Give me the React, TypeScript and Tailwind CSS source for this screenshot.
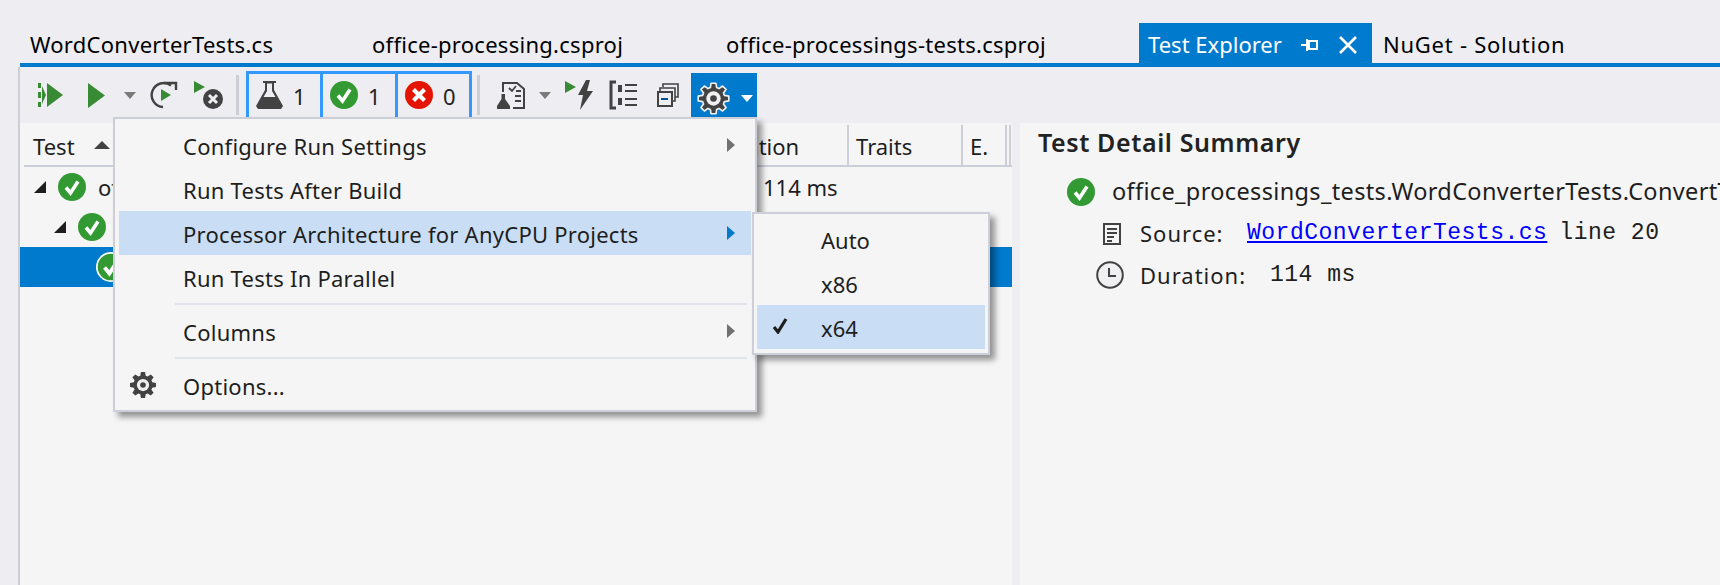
import React from 'react';

const gearPath = (cx: number, cy: number, outer: number, inner: number, teeth = 8) => {
  const pts: string[] = [];
  const step = (Math.PI * 2) / teeth;
  for (let i = 0; i < teeth; i++) {
    const a = i * step - Math.PI / 2;
    const list: [number, number][] = [
      [inner, a - step * 0.36],
      [outer, a - step * 0.2],
      [outer, a + step * 0.2],
      [inner, a + step * 0.36],
    ];
    list.forEach(([r, t]) => pts.push(`${(cx + r * Math.cos(t)).toFixed(2)} ${(cy + r * Math.sin(t)).toFixed(2)}`));
  }
  return `M${pts.join('L')}Z`;
};

const Gear = ({ outline = false, size = 28 }: { outline?: boolean; size?: number }) => (
  <svg width={size} height={size} viewBox="0 0 32 32">
    <path
      d={gearPath(16, 16, 15, 11)}
      fill="#424242"
      stroke={outline ? '#f0eff1' : 'none'}
      strokeWidth={outline ? 1.6 : 0}
      strokeLinejoin="round"
    />
    <circle cx="16" cy="16" r="7" fill="#f0eff1" />
    <circle cx="16" cy="16" r="3.2" fill="#424242" />
  </svg>
);

const CheckCircle = ({ size = 28, ring = false }: { size?: number; ring?: boolean }) => (
  <svg width={size} height={size} viewBox="0 0 28 28" className="shrink-0">
    <circle cx="14" cy="14" r={ring ? 13.2 : 14} fill="#339933" stroke={ring ? '#ffffff' : 'none'} strokeWidth={ring ? 1.6 : 0} />
    <path d="M8 14.5 L12.5 20 L20 8.5" fill="none" stroke="#ffffff" strokeWidth="3.6" />
  </svg>
);

const CrossCircle = () => (
  <svg width="28" height="28" viewBox="0 0 28 28">
    <circle cx="14" cy="14" r="14" fill="#e51400" />
    <path d="M8.5 8.5 L19.5 19.5 M19.5 8.5 L8.5 19.5" stroke="#ffffff" strokeWidth="4.2" />
  </svg>
);

const Flask = () => (
  <svg width="27" height="28" viewBox="0 0 27 28">
    <path d="M7 0H20V2H18V9L27 25L25 28H2L0 25L9 9V2H7Z" fill="#424242" />
    <path d="M11 2.5H16V10L19.5 16H7.5L11 10Z" fill="#eeeef2" />
  </svg>
);

const Caret = ({ color = '#7a7a7a' }: { color?: string }) => (
  <svg width="12" height="7" viewBox="0 0 12 7">
    <path d="M0 0H12L6 7Z" fill={color} />
  </svg>
);

const Arrow = ({ color = '#717171' }: { color?: string }) => (
  <svg width="8" height="14" viewBox="0 0 8 14" className="absolute right-[16px] top-[15px]">
    <path d="M0 0L8 7L0 14Z" fill={color} />
  </svg>
);

const Separator = () => <div className="w-[3px] h-[40px] bg-[#ccced8]" />;

const CountButton = ({ icon, count, width }: { icon: React.ReactNode; count: string; width: string }) => (
  <div className={`${width} h-[50px] flex items-start pt-[7px] pl-[7px] border-[3px] border-b-0 border-[#3399ff] -ml-[3px] first:ml-0`}>
    {icon}
    <span className="ml-[10px] text-[22px] leading-[30px] text-[#222222]">{count}</span>
  </div>
);

const Toolbar = () => (
  <div className="h-[56px] flex items-center">
    <svg width="26" height="26" viewBox="0 0 26 26" className="ml-[18px]">
      <path d="M0 1H3V6H0ZM0 10H3V16H0ZM0 20H3V25H0Z" fill="#388a34" />
      <path d="M4 4L8 13L4 22Z" fill="#388a34" />
      <path d="M9 1L25 13L9 25Z" fill="#388a34" />
    </svg>
    <svg width="17" height="25" viewBox="0 0 17 25" className="ml-[24px]">
      <path d="M0 0L17 12.5L0 25Z" fill="#388a34" />
    </svg>
    <div className="ml-[19px] flex"><Caret /></div>
    <svg width="28" height="28" viewBox="0 0 28 28" className="ml-[14px]">
      <path d="M21 4.5A12 12 0 1 0 13 26" fill="none" stroke="#424242" strokeWidth="2.4" />
      <path d="M14 2H26V9" fill="none" stroke="#424242" strokeWidth="2.4" />
      <path d="M11 8L21 14L11 20Z" fill="#388a34" />
    </svg>
    <svg width="29" height="28" viewBox="0 0 29 28" className="ml-[16px]">
      <path d="M0 0L11 6L0 12Z" fill="#388a34" />
      <circle cx="19" cy="18" r="10" fill="#424242" />
      <path d="M15 14L23 22M23 14L15 22" stroke="#eeeef2" strokeWidth="3" />
    </svg>
    <div className="ml-[13px]"><Separator /></div>
    <div className="ml-[7px] flex self-start mt-[4px]">
      <CountButton icon={<Flask />} count="1" width="w-[77px]" />
      <CountButton icon={<CheckCircle />} count="1" width="w-[78px]" />
      <CountButton icon={<CrossCircle />} count="0" width="w-[77px]" />
    </div>
    <div className="ml-[5px]"><Separator /></div>
    <svg width="28" height="28" viewBox="0 0 28 28" className="ml-[17px]">
      <path d="M6 11V2H20L27 8V27H16" fill="none" stroke="#424242" strokeWidth="2" />
      <path d="M12 7L15 10L19 5M19 10H24M18 15H24M18 20H24" fill="none" stroke="#424242" strokeWidth="1.8" />
      <path d="M2 13H10M4.5 13V18L0 25V28H13V25L8 18V13Z" fill="#424242" />
    </svg>
    <div className="ml-[14px] flex"><Caret /></div>
    <svg width="29" height="30" viewBox="0 0 29 30" className="ml-[14px]">
      <path d="M0 1L11 7L0 13Z" fill="#388a34" />
      <path d="M21 0L13 15H18L15 30L28 11H22L25 0Z" fill="#424242" />
    </svg>
    <svg width="28" height="30" viewBox="0 0 28 30" className="ml-[15px]">
      <path d="M7 2H2V28H7" fill="none" stroke="#424242" strokeWidth="3" />
      <path d="M9 5H13V12H9ZM9 18H13V25H9Z" fill="#424242" />
      <path d="M16 5H28M16 11H28M16 19H28M16 25H28" stroke="#424242" strokeWidth="2.2" />
    </svg>
    <svg width="22" height="24" viewBox="0 0 22 24" className="ml-[20px]">
      <path d="M6 4V1H21V14H18" fill="none" stroke="#424242" strokeWidth="1.6" />
      <path d="M3 8V5H18V18H15" fill="none" stroke="#424242" strokeWidth="1.6" />
      <rect x="1" y="9" width="14" height="14" fill="none" stroke="#424242" strokeWidth="2" />
      <path d="M4 16H11" stroke="#00529b" strokeWidth="2" />
    </svg>
    <div className="ml-[12px] self-start mt-[6px] w-[66px] h-[50px] bg-[#007acc] flex items-center pl-[6px]">
      <Gear outline size={33} />
      <div className="ml-[11px] flex"><Caret color="#ffffff" /></div>
    </div>
  </div>
);

const MenuItem = ({
  label,
  active = false,
  arrow = false,
  icon,
}: {
  label: string;
  active?: boolean;
  arrow?: boolean;
  icon?: React.ReactNode;
}) => (
  <div className={`relative h-[44px] flex items-center pl-[64px] pt-[3px] text-[22px] tracking-[0.25px] text-[#1e1e1e] ${active ? 'bg-[#c9def5]' : ''}`}>
    {icon && <div className="absolute left-[10px] top-[8px] flex">{icon}</div>}
    {label}
    {arrow && <Arrow color={active ? '#007acc' : '#717171'} />}
  </div>
);

const MenuSeparator = () => <div className="ml-[56px] mr-[4px] h-[2px] my-[4px] bg-[#e0e3e9]" />;

const RunMenu = () => (
  <div className="absolute left-[113px] top-[117px] w-[644px] h-[295px] p-[4px] bg-[#f5f5f5] border-2 border-[#ccced8] shadow-[5px_5px_6px_rgba(0,0,0,0.4)]">
    <MenuItem label="Configure Run Settings" arrow />
    <MenuItem label="Run Tests After Build" />
    <MenuItem label="Processor Architecture for AnyCPU Projects" active arrow />
    <MenuItem label="Run Tests In Parallel" />
    <MenuSeparator />
    <MenuItem label="Columns" arrow />
    <MenuSeparator />
    <MenuItem label="Options..." icon={<Gear />} />
  </div>
);

const ArchMenu = () => (
  <div className="absolute left-[752px] top-[212px] w-[238px] h-[143px] p-[3px] bg-[#f5f5f5] border-2 border-[#ccced8] shadow-[5px_5px_6px_rgba(0,0,0,0.4)]">
    {['Auto', 'x86', 'x64'].map((item) => (
      <div
        key={item}
        className={`relative h-[44px] flex items-center pl-[64px] pt-[3px] text-[22px] text-[#1e1e1e] ${item === 'x64' ? 'bg-[#c9def5]' : ''}`}
      >
        {item === 'x64' && (
          <svg width="16" height="16" viewBox="0 0 16 16" className="absolute left-[15px] top-[13px]">
            <path d="M2 9L6 14L14 1" fill="none" stroke="#1e1e1e" strokeWidth="3.2" />
          </svg>
        )}
        {item}
      </div>
    ))}
  </div>
);

const HeaderCell = ({ width, children }: { width: string; children?: React.ReactNode }) => (
  <div className={`${width} shrink-0 h-full flex items-center pl-[7px] pt-[3px] border-r-2 border-[#ccced8]`}>{children}</div>
);

const TreeRow = ({
  indent,
  label,
  duration,
  selected = false,
}: {
  indent: string;
  label: string;
  duration?: string;
  selected?: boolean;
}) => (
  <div className={`h-[40px] flex items-center ${selected ? 'bg-[#007acc] text-white' : 'text-[#1e1e1e]'}`}>
    <div className={`${indent} flex items-center`}>
      {!selected && (
        <svg width="12" height="12" viewBox="0 0 12 12" className="mr-[12px]">
          <path d="M12 0V12H0Z" fill="#1e1e1e" />
        </svg>
      )}
      <CheckCircle ring={selected} size={selected ? 30 : 28} />
    </div>
    <span className="ml-[12px] w-[300px] text-[22px]">{label}</span>
    {duration && <span className="absolute left-[743px] text-[22px] text-[#1e1e1e]">{duration}</span>}
  </div>
);

const TestList = () => (
  <div className="w-[992px] bg-[#f5f5f5] pt-[2px] relative">
    <div className="ml-[4px] h-[42px] flex border-b-2 border-[#ccced8] text-[22px] text-[#1e1e1e]">
      <HeaderCell width="w-[690px]">
        <span className="ml-[2px]">Test</span>
        <svg width="16" height="8" viewBox="0 0 16 8" className="ml-[19px] -mt-[3px]">
          <path d="M8 0L16 8H0Z" fill="#424242" />
        </svg>
      </HeaderCell>
      <HeaderCell width="w-[135px]">
        <span className="ml-[-13px]">Duration</span>
      </HeaderCell>
      <HeaderCell width="w-[114px]">Traits</HeaderCell>
      <HeaderCell width="w-[44px]">E.</HeaderCell>
      <div className="w-[4px] h-full shrink-0 border-r-2 border-[#ccced8]" />
    </div>
    <TreeRow indent="pl-[14px]" label="office-processings-tests" duration="114 ms" />
    <TreeRow indent="pl-[34px]" label="office_processings_tests" />
    <TreeRow indent="pl-[76px]" label="ConvertTest" selected />
  </div>
);

const DetailPanel = () => (
  <div className="flex-1 bg-[#f5f5f5] pl-[18px] text-[#1e1e1e] whitespace-nowrap overflow-hidden">
    <h2 className="h-[40px] flex items-center text-[25px] tracking-[0.6px] font-semibold text-[#222222]">Test Detail Summary</h2>
    <div className="mt-[8px] h-[42px] flex items-center pl-[29px] text-[23.5px] tracking-[0.35px]">
      <CheckCircle />
      <span className="ml-[17px] shrink-0">office_processings_tests.WordConverterTests.ConvertTest</span>
    </div>
    <div className="h-[41px] flex items-center pl-[65px] text-[23px]">
      <svg width="18" height="22" viewBox="0 0 18 22">
        <rect x="1" y="1" width="16" height="20" fill="none" stroke="#424242" strokeWidth="2" />
        <path d="M4 6H14M4 10H14M4 14H11M4 18H9" stroke="#424242" strokeWidth="1.8" />
      </svg>
      <span className="ml-[19px] w-[107px] text-[22px] tracking-[1px]">Source:</span>
      <span className="font-['Liberation_Mono',monospace] tracking-[0.5px] text-[#0000ff] underline">WordConverterTests.cs</span>
      <span className="ml-[12px] font-['Liberation_Mono',monospace] tracking-[0.5px]">line 20</span>
    </div>
    <div className="h-[42px] flex items-center pl-[58px] text-[23px]">
      <svg width="28" height="28" viewBox="0 0 28 28">
        <circle cx="14" cy="14" r="12.8" fill="#f0eff1" stroke="#424242" strokeWidth="2" />
        <path d="M13 7V15H20" fill="none" stroke="#424242" strokeWidth="2" />
      </svg>
      <span className="ml-[16px] w-[130px] text-[22px] tracking-[1px]">Duration:</span>
      <span className="font-['Liberation_Mono',monospace] tracking-[0.5px]">114 ms</span>
    </div>
  </div>
);

export default function App() {
  return (
    <div className="relative w-[1720px] h-[585px] overflow-hidden bg-[#eeeef2] font-['Noto_Sans',sans-serif]">
      <div className="ml-[20px] h-[67px] flex items-end border-b-4 border-[#007acc] text-[22px] tracking-[0.27px] text-black whitespace-nowrap">
        <span className="ml-[10px] mb-[2px] w-[342px]">WordConverterTests.cs</span>
        <span className="mb-[2px] w-[354px]">office-processing.csproj</span>
        <span className="mb-[2px] w-[413px]">office-processings-tests.csproj</span>
        <div className="h-[40px] w-[233px] bg-[#007acc] text-white flex items-center pl-[9px] pt-[3px] tracking-normal">
          Test Explorer
          <svg width="18" height="14" viewBox="0 0 18 14" className="ml-[19px]">
            <path d="M0 7H6M6 1V13M8 3H16V11H8Z" fill="none" stroke="#ffffff" strokeWidth="2" />
          </svg>
          <svg width="20" height="20" viewBox="0 0 20 20" className="ml-[19px]">
            <path d="M2 2L18 18M18 2L2 18" stroke="#ffffff" strokeWidth="2.6" />
          </svg>
        </div>
        <span className="ml-[11px] mb-[2px] tracking-[0.75px]">NuGet - Solution</span>
      </div>
      <div className="ml-[18px] h-[518px] border-l-2 border-[#ccced8] flex flex-col">
        <Toolbar />
        <div className="flex-1 flex">
          <TestList />
          <div className="w-[8px]" />
          <DetailPanel />
        </div>
      </div>
      <RunMenu />
      <ArchMenu />
    </div>
  );
}
